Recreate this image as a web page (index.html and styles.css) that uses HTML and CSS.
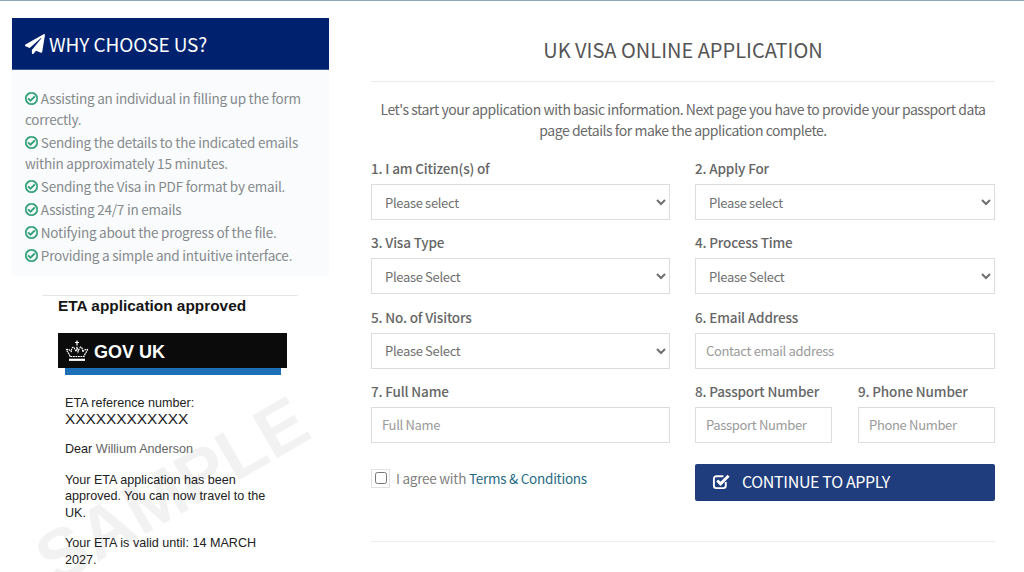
FILE: index.html
```html
<!DOCTYPE html>
<html lang="en">
  <head>
    <meta charset="UTF-8" />
    <meta name="viewport" content="width=device-width, initial-scale=1.0" />
    <title>UK Visa Online Application</title>
    <link rel="stylesheet" href="styles.css">
  </head>
  <body>
    <svg class="icon-defs" aria-hidden="true">
      <symbol id="icon-check" viewBox="0 0 512 512">
        <path d="M256 8C119.033 8 8 119.033 8 256s111.033 248 248 248 248-111.033 248-248S392.967 8 256 8zm0 48c110.532 0 200 89.451 200 200 0 110.532-89.451 200-200 200-110.532 0-200-89.451-200-200 0-110.532 89.451-200 200-200m140.204 130.267l-22.536-22.718c-4.667-4.705-12.265-4.736-16.97-.068L215.346 303.697l-59.792-60.277c-4.667-4.705-12.265-4.736-16.97-.068l-22.719 22.536c-4.705 4.667-4.736 12.265-.068 16.971l90.781 91.516c4.667 4.705 12.265 4.736 16.97.068l172.589-171.204c4.704-4.668 4.735-12.266.067-16.97z" />
      </symbol>
    </svg>

    <div class="page">
      <aside class="sidebar">
        <div class="why-box">
          <h2 class="why-title">
            <svg class="plane-icon" viewBox="0 0 512 512" aria-hidden="true">
              <path d="M476 3.2L12.5 270.6c-18.1 10.4-15.8 35.6 2.2 43.2L121 358.4l287.3-253.2c5.5-4.9 13.3 2.6 8.6 8.3L176 407v80.5c0 23.6 28.5 32.9 42.5 15.8L282 426l124.6 52.2c14.2 6 30.4-2.9 33-18.2l72-432C515 7.8 493.3-6.8 476 3.2z" />
            </svg>
            WHY CHOOSE US?
          </h2>
          <ul class="why-list">
            <li><svg class="check-icon"><use href="#icon-check" /></svg> Assisting an individual in filling up the form correctly.</li>
            <li><svg class="check-icon"><use href="#icon-check" /></svg> Sending the details to the indicated emails within approximately 15 minutes.</li>
            <li><svg class="check-icon"><use href="#icon-check" /></svg> Sending the Visa in PDF format by email.</li>
            <li><svg class="check-icon"><use href="#icon-check" /></svg> Assisting 24/7 in emails</li>
            <li><svg class="check-icon"><use href="#icon-check" /></svg> Notifying about the progress of the file.</li>
            <li><svg class="check-icon"><use href="#icon-check" /></svg> Providing a simple and intuitive interface.</li>
          </ul>
        </div>

        <div class="sample">
          <h3 class="sample-title">ETA application approved</h3>
          <div class="gov-bar">
            <svg class="crown-icon" viewBox="0 0 24 22" aria-hidden="true">
              <g fill="none" stroke="#fff">
                <path d="M5 16.5 C4 13 2 12 1.5 9.5 C3.5 9 5.5 10.5 6.5 12 C6 9.5 7 7.5 8.5 7 C9.5 8.5 10.5 10 11 11.5 L12 7 L13 11.5 C13.5 10 14.5 8.5 15.5 7 C17 7.5 18 9.5 17.5 12 C18.5 10.5 20.5 9 22.5 9.5 C22 12 20 13 19 16.5 Z" stroke-width="1.2" stroke-dasharray="1.8 .7" />
                <path d="M4 19.8 H20" stroke-width="2.2" />
                <path d="M12 .5 V5.5 M10 2.5 H14" stroke-width="1.2" />
              </g>
            </svg>
            <span class="gov-name">GOV UK</span>
          </div>
          <div class="gov-strip"></div>
          <div class="sample-text">
            <p class="ref-line">ETA reference number:<br /><span class="ref-number">XXXXXXXXXXXX</span></p>
            <p>Dear <span class="name">Willium Anderson</span></p>
            <p>Your ETA application has been approved. You can now travel to the UK.</p>
            <p>Your ETA is valid until: 14 MARCH 2027.</p>
          </div>
          <div class="watermark">SAMPLE</div>
        </div>
      </aside>

      <main class="content">
        <h1 class="form-title">UK VISA ONLINE APPLICATION</h1>
        <p class="intro">Let's start your application with basic information. Next page you have to provide your passport data page details for make the application complete.</p>

        <form class="visa-form">
          <div class="field">
            <label>1. I am Citizen(s) of</label>
            <select><option>Please select</option></select>
          </div>
          <div class="field">
            <label>2. Apply For</label>
            <select><option>Please select</option></select>
          </div>
          <div class="field">
            <label>3. Visa Type</label>
            <select><option>Please Select</option></select>
          </div>
          <div class="field">
            <label>4. Process Time</label>
            <select><option>Please Select</option></select>
          </div>
          <div class="field">
            <label>5. No. of Visitors</label>
            <select><option>Please Select</option></select>
          </div>
          <div class="field">
            <label>6. Email Address</label>
            <input type="text" placeholder="Contact email address" />
          </div>
          <div class="field">
            <label>7. Full Name</label>
            <input type="text" placeholder="Full Name" />
          </div>
          <div class="field-pair">
            <div class="field">
              <label>8. Passport Number</label>
              <input type="text" placeholder="Passport Number" />
            </div>
            <div class="field">
              <label>9. Phone Number</label>
              <input type="text" placeholder="Phone Number" />
            </div>
          </div>
          <div class="agree">
            <span class="check-wrap"><input type="checkbox" /></span>
            <span>I agree with <a href="#">Terms &amp; Conditions</a></span>
          </div>
          <button class="apply-button" type="button">
            <svg class="square-icon" viewBox="0 0 20 20" aria-hidden="true">
              <path d="M14.5 10.5 V14.5 A2.5 2.5 0 0 1 12 17 H4.5 A2.5 2.5 0 0 1 2 14.5 V7 A2.5 2.5 0 0 1 4.5 4.5 H12" fill="none" stroke="#fff" stroke-width="2" />
              <path d="M5.5 9 L9 12.5 L17.5 4" fill="none" stroke="#fff" stroke-width="3" />
            </svg>
            CONTINUE TO APPLY
          </button>
        </form>
        <div class="form-end"></div>
      </main>
    </div>
  </body>
</html>
```

FILE: styles.css
```css
* {
  box-sizing: border-box;
}

html,
body {
  height: 572px;
  overflow: hidden;
}

body {
  margin: 0;
  background: #ffffff;
  border-top: 1px solid #8fa6bb;
  font-family: "Noto Sans CJK SC", "Open Sans", sans-serif;
  color: #6f6f6f;
}

.icon-defs {
  display: none;
}

.page {
  display: flex;
  align-items: flex-start;
  height: 571px;
  padding: 17px 29px 0 12px;
  overflow: hidden;
}

.sidebar {
  width: 317px;
  flex: none;
}

.content {
  width: 624px;
  margin-left: 42px;
}

/* left box */
.why-title {
  display: flex;
  align-items: center;
  gap: 4px;
  height: 52px;
  margin: 0;
  padding-left: 13px;
  background: #00226e;
  border-bottom: 1px solid #3d5a99;
  color: #ffffff;
  font-size: 19px;
  letter-spacing: -0.1px;
  font-weight: 400;
}

.plane-icon {
  width: 20px;
  height: 20px;
  fill: #ffffff;
}

.why-list {
  list-style: none;
  margin: 0;
  padding: 18px 13px 8px;
  background: #f9fbfc;
  font-size: 13.5px;
  letter-spacing: -0.22px;
  line-height: 21px;
  color: #858a8c;
}

.why-list li {
  margin-bottom: 2px;
}

.check-icon {
  width: 13px;
  height: 13px;
  fill: #2a9d72;
  stroke: #2a9d72;
  stroke-width: 24;
  vertical-align: -1px;
}

/* sample letter */
.sample {
  position: relative;
  width: 256px;
  height: 276px;
  margin: 19px 0 0 30px;
  border-top: 1px solid #e6e6e6;
  font-family: "Liberation Sans", Arial, sans-serif;
  color: #222222;
}

.sample-title {
  margin: 0 0 17px 16px;
  font-size: 15.4px;
  line-height: 20px;
  font-weight: 700;
  color: #151515;
}

.gov-bar {
  display: flex;
  align-items: center;
  gap: 5px;
  width: 229px;
  height: 35px;
  margin-left: 16px;
  padding-left: 7px;
  background: #0b0b0c;
  color: #ffffff;
  font-size: 18px;
  font-weight: 700;
}

.gov-name {
  padding-top: 3px;
}

.crown-icon {
  width: 24px;
  height: 22px;
}

.gov-strip {
  width: 216px;
  height: 7px;
  margin-left: 23px;
  background: #1d70b8;
}

.sample-text {
  padding: 20px 16px 0 23px;
  font-size: 12.6px;
  line-height: 16.6px;
}

.sample-text p {
  margin: 0 0 14px;
}

.ref-line {
  height: 32px;
}

.ref-number {
  display: block;
  margin-top: -1px;
  font-size: 15.4px;
  line-height: 15px;
}

.name {
  color: #666666;
}

.watermark {
  position: absolute;
  left: -20px;
  top: 153px;
  transform: rotate(-30deg);
  font-size: 72px;
  font-weight: 700;
  color: rgba(0, 0, 0, 0.05);
}

/* right form */
.form-title {
  margin: 0;
  padding: 15px 0 14px;
  border-bottom: 1px solid #ececec;
  text-align: center;
  font-size: 20px;
  line-height: 34px;
  font-weight: 400;
  color: #555555;
}

.intro {
  margin: 17px 0 0;
  text-align: center;
  font-size: 14px;
  letter-spacing: -0.46px;
  line-height: 21px;
  color: #6a6a6a;
}

.visa-form {
  display: grid;
  grid-template-columns: 299px 300px;
  column-gap: 25px;
  row-gap: 14.3px;
  margin-top: 19px;
}

.field label {
  display: block;
  height: 24px;
  font-size: 13.5px;
  letter-spacing: -0.16px;
  line-height: 17px;
  font-weight: 500;
  white-space: nowrap;
  color: #666666;
}

.field select,
.field input {
  display: block;
  width: 100%;
  height: 36px;
  border: 1px solid #dddddd;
  background: #ffffff;
  font-family: inherit;
  font-size: 13px;
  letter-spacing: -0.33px;
  color: #6f6f6f;
}

.field select {
  padding-left: 9px;
}

.field input {
  padding: 0 10px;
}

.field input::placeholder {
  color: #9a9a9a;
}

.field-pair {
  display: grid;
  grid-template-columns: 137px 137px;
  justify-content: space-between;
}

.agree {
  display: flex;
  align-items: center;
  align-self: start;
  gap: 6px;
  margin-top: 11px;
  font-size: 13.5px;
  letter-spacing: -0.25px;
  color: #808080;
}

.agree a {
  color: #1f6b85;
  text-decoration: none;
}

.check-wrap {
  display: flex;
  align-items: center;
  justify-content: center;
  width: 19px;
  height: 19px;
  border: 1px solid #e2e2e2;
}

.check-wrap input {
  width: 12px;
  height: 12px;
  margin: 0;
}

.apply-button {
  display: flex;
  align-items: center;
  gap: 11px;
  height: 37px;
  margin-top: 7px;
  padding: 0 0 3px 17px;
  border: none;
  border-radius: 2px;
  background: #1f3d7c;
  color: #ffffff;
  font-family: inherit;
  font-size: 16px;
  letter-spacing: -0.35px;
  cursor: pointer;
}

.square-icon {
  width: 19px;
  height: 19px;
}

.form-end {
  margin-top: 40px;
  border-top: 1px solid #ececec;
}
```
